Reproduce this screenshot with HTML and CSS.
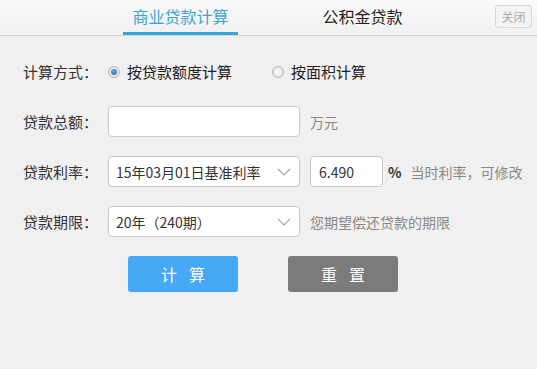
FILE: index.html
```html
<!DOCTYPE html>
<html lang="zh-CN">
<head>
    <meta charset="UTF-8">
    <title>房贷计算器</title>
    <link rel="stylesheet" href="styles.css">
</head>
<body>
    <div class="header">
        <div class="tabs">
            <div class="tab active">商业贷款计算</div>
            <div class="tab">公积金贷款</div>
        </div>
        <button class="close-btn">关闭</button>
    </div>

    <div class="form">
        <div class="row">
            <span class="label">计算方式：</span>
            <label class="radio checked"><span class="dot"></span>按贷款额度计算</label>
            <label class="radio"><span class="dot"></span>按面积计算</label>
        </div>
        <div class="row">
            <span class="label">贷款总额：</span>
            <input type="text" class="field">
            <span class="hint">万元</span>
        </div>
        <div class="row">
            <span class="label">贷款利率：</span>
            <div class="select">
                <span>15年03月01日基准利率</span>
                <svg class="arrow" width="14" height="8" viewBox="0 0 14 8"><path d="M1 1 L7 7 L13 1" fill="none" stroke="#a8a8a8" stroke-width="1.2"/></svg>
            </div>
            <input type="text" class="field rate" value="6.490">
            <span class="pct">%</span>
            <span class="hint">当时利率，可修改</span>
        </div>
        <div class="row">
            <span class="label">贷款期限：</span>
            <div class="select">
                <span>20年（240期）</span>
                <svg class="arrow" width="14" height="8" viewBox="0 0 14 8"><path d="M1 1 L7 7 L13 1" fill="none" stroke="#a8a8a8" stroke-width="1.2"/></svg>
            </div>
            <span class="hint">您期望偿还贷款的期限</span>
        </div>
        <div class="buttons">
            <button class="btn calc">计算</button>
            <button class="btn reset">重置</button>
        </div>
    </div>
</body>
</html>
```

FILE: styles.css
```css
body {
    margin: 0;
    width: 537px;
    height: 369px;
    background-color: #f0f0f0;
    font-family: "Microsoft YaHei", "Noto Sans CJK SC", sans-serif;
    color: #333;
    overflow: hidden;
}
.header {
    height: 35px;
    border-bottom: 1px solid #d4d4d4;
    background: linear-gradient(#fbfbfb, #f1f1f1);
    display: flex;
    justify-content: space-between;
    align-items: flex-start;
}
.tabs {
    display: flex;
    padding-left: 123px;
}
.tab {
    width: 115px;
    height: 32px;
    line-height: 32px;
    text-align: center;
    font-size: 16px;
    color: #222;
}
.tab + .tab {
    margin-left: 67px;
}
.tab.active {
    color: #3aa3d6;
    border-bottom: 3px solid #3aa3d6;
}
.close-btn {
    margin: 5px 5px 0 0;
    width: 37px;
    height: 23px;
    padding: 0;
    font-family: inherit;
    font-size: 12px;
    color: #aaa;
    background: #f4f4f4;
    border: 1px solid #d8d8d8;
    border-radius: 3px;
}
.form {
    padding: 20px 0 0 23px;
}
.row {
    display: flex;
    align-items: center;
    height: 31px;
    margin-bottom: 19px;
}
.label {
    width: 85px;
    font-size: 15px;
    color: #333;
}
.radio {
    display: flex;
    align-items: center;
    font-size: 15px;
    color: #222;
}
.radio + .radio {
    margin-left: 40px;
}
.dot {
    width: 10px;
    height: 10px;
    border: 1px solid #b5b5b5;
    border-radius: 50%;
    background: radial-gradient(#fafafa, #dcdcdc);
    margin-right: 7px;
    position: relative;
}
.radio.checked .dot::after {
    content: '';
    position: absolute;
    left: 2px;
    top: 2px;
    width: 6px;
    height: 6px;
    border-radius: 50%;
    background: radial-gradient(circle at 40% 35%, #5ab0e8, #1f5f9a);
}
.field {
    box-sizing: border-box;
    width: 192px;
    height: 31px;
    border: 1px solid #c8c8c8;
    border-radius: 4px;
    background: #fff;
    padding: 0 8px;
    font-family: inherit;
    font-size: 14px;
    color: #333;
}
.field.rate {
    width: 73px;
    margin-left: 10px;
}
.select {
    box-sizing: border-box;
    width: 192px;
    height: 31px;
    border: 1px solid #c8c8c8;
    border-radius: 4px;
    background: #fff;
    padding: 0 7px;
    display: flex;
    align-items: center;
    justify-content: space-between;
    font-size: 14px;
    color: #333;
}
.arrow {
    margin-right: 1px;
}
.hint {
    margin-left: 10px;
    font-size: 14px;
    color: #888;
}
.pct {
    margin-left: 5px;
    font-size: 14px;
    font-weight: bold;
    color: #333;
}
.pct + .hint {
    margin-left: 9px;
}
.buttons {
    display: flex;
    padding-left: 105px;
    margin-top: 11px;
}
.btn {
    width: 110px;
    height: 36px;
    border: none;
    border-radius: 3px;
    font-family: inherit;
    font-size: 16px;
    letter-spacing: 12px;
    text-indent: 12px;
    color: #fff;
}
.btn.calc {
    background-color: #46a9f6;
}
.btn.reset {
    margin-left: 50px;
    background-color: #7b7b7b;
}
```
